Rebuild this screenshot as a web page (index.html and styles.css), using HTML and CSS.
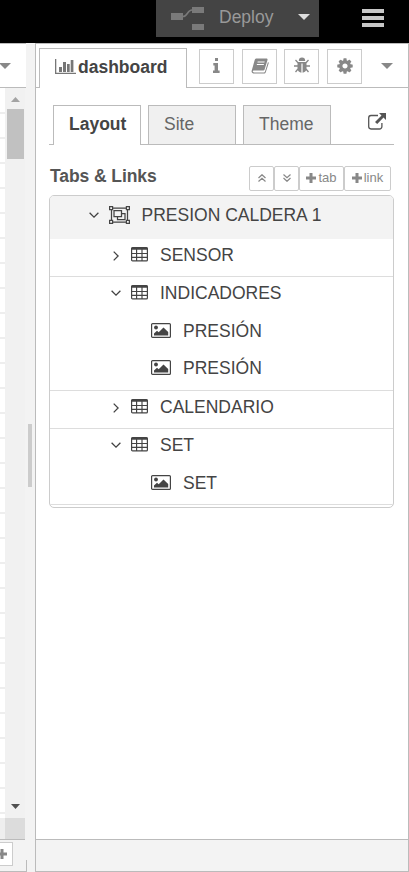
FILE: index.html
```
<!DOCTYPE html>
<html lang="es">
<head>
<meta charset="utf-8">
<title>Dashboard</title>
<link rel="stylesheet" href="styles.css">
</head>
<body>
<svg class="defs" width="0" height="0">
  <symbol id="table" viewBox="0 0 17 15"><rect x=".6" y=".6" width="15.800" height="13.300" rx="1" fill="none" stroke="currentColor" stroke-width="1.200"/><path d="M.6.500h15.800v2.200H.6z"/><path d="M1 6.500h15M1 10.300h15M5.600 2v12M11 2v12" fill="none" stroke="currentColor" stroke-width="1.150"/></symbol>
  <symbol id="image" viewBox="0 0 20 15"><rect x=".6" y=".6" width="18.800" height="13.800" rx="1" fill="none" stroke="currentColor" stroke-width="1.200"/><circle cx="5" cy="4.500" r="1.900"/><path d="M3 12.500v-2l3-2.700 1.700 1.500L12.500 4.500l4.700 4.600v3.400z"/></symbol>
  <symbol id="down" viewBox="0 0 10 6"><path d="M.6.7 5 5.100 9.400.7" fill="none" stroke="currentColor" stroke-width="1.300"/></symbol>
  <symbol id="right" viewBox="0 0 6 10"><path d="M.7.6 5.100 5 .7 9.400" fill="none" stroke="currentColor" stroke-width="1.300"/></symbol>
  <symbol id="plus" viewBox="0 0 10 10"><path d="M3.500 0h3v3.500H10v3H6.500V10h-3V6.500H0v-3h3.500z"/></symbol>
</svg>
<header class="topbar">
  <div class="deploy">
    <svg class="deploy-icon" width="33" height="24" viewBox="0 0 33 24"><path d="M0 6h12v7H0zM21 0h12v6H21zM21 17h12v6H21z"/><path d="M12 9.500c5 0 4-6.500 9-6.500" fill="none" stroke="currentColor" stroke-width="1.500"/></svg>
    <span>Deploy</span>
    <i class="caret light"></i>
  </div>
  <div class="burger"><i></i><i></i><i></i></div>
</header>
<div class="main">
  <section class="workspace">
    <div class="ws-tabs"><i class="caret"></i></div>
    <div class="ws-body">
      <div class="canvas"></div>
      <div class="scroll"><i class="arrow-up"></i><i class="thumb"></i><i class="arrow-down"></i></div>
    </div>
    <div class="ws-corner"><i></i><b></b></div>
    <div class="ws-footer"><div class="add"><svg width="10" height="10"><use href="#plus"/></svg></div><i class="edge"></i></div>
  </section>
  <div class="splitter"><i></i></div>
  <aside class="sidebar">
    <div class="tabs">
      <div class="tab-active">
        <svg width="21" height="15" viewBox="0 0 21 15"><path d="M0 0h1.300v13.700H21V15H0zM4 8h3v5H4zM8 3h3v10H8zM12 5h2.700v8H12zM15.700 1h2.700v12h-2.700z"/></svg>
        <span>dashboard</span>
      </div>
      <div class="tab-icons">
        <div class="ib"><svg width="7" height="15" viewBox="0 0 7 15"><path d="M2 0h3v3H2zM.3 5H5v7.500h1.600V15H0v-2.500h1.600v-5H.3z"/></svg></div>
        <div class="ib"><svg width="18" height="16" viewBox="0 0 18 16"><path fill-rule="evenodd" d="M5.500.5h9.800c1 0 1.500.7 1.200 1.600l-2.900 9.400c-.3.800-.8 1.100-1.500 1.100H3c-.8 0-1.400.3-1.200 1 .2.600.8.900 1.500.9h9.600c.6 0 .9-.3 1.100-.9L17 4c.9.400.8 1 .6 1.600l-2.800 8.700c-.3.800-.9 1.300-1.700 1.300H3.200c-1.500 0-2.900-1.200-2.600-2.600L3.700 2C4 1 4.600.5 5.500.5zM6.700 3.500l-.3 1h7l.3-1zM6 6l-.3 1h7L13 6z"/></svg></div>
        <div class="ib"><svg width="16" height="17" viewBox="0 0 16 17"><path d="M4.800 4a3.200 3.400 0 0 1 6.400 0zM3.500 5h9v6.500c0 2.500-2 4-3.900 4.200V6.500H7.400v9.200c-1.900-.2-3.900-1.700-3.900-4.200z"/><path d="M1.500 3 4 5.700M14.500 3 12 5.700M0 9h4m8 0h4M4 12l-2.500 3M12 12l2.500 3" fill="none" stroke="currentColor" stroke-width="1.300"/></svg></div>
        <div class="ib"><svg width="18" height="18" viewBox="0 0 1792 1792"><path d="M1152 896q0-106-75-181t-181-75-181 75-75 181 75 181 181 75 181-75 75-181zm512-109v222q0 12-8 23t-20 13l-185 28q-19 54-39 91 35 50 107 138 10 12 10 25t-9 23q-27 37-99 108t-94 71q-12 0-26-9l-138-108q-44 23-91 38-16 136-29 186-7 28-36 28h-222q-14 0-24.500-8.500t-11.500-21.500l-28-184q-49-16-90-37l-141 107q-10 9-25 9-14 0-25-11-126-114-165-168-7-10-7-23 0-12 8-23 15-21 51-66.500t54-70.500q-27-50-41-99l-183-27q-13-2-21-12.500t-8-23.500v-222q0-12 8-23t19-13l186-28q14-46 39-92-40-57-107-138-10-12-10-24 0-10 9-23 26-36 98.500-107.500t94.500-71.500q13 0 26 10l138 107q44-23 91-38 16-136 29-186 7-28 36-28h222q14 0 24.500 8.500t11.500 21.500l28 184q49 16 90 37l142-107q9-9 24-9 13 0 25 10 129 119 165 170 7 8 7 22 0 12-8 23-15 21-51 66.500t-54 70.500q26 50 41 98l183 28q13 2 21 12.500t8 23.500z"/></svg></div>
        <i class="caret"></i>
      </div>
    </div>
    <div class="content">
      <nav class="subtabs">
        <div class="subtab on">Layout</div>
        <div class="subtab">Site</div>
        <div class="subtab">Theme</div>
        <svg class="ext" width="18" height="17" viewBox="0 0 18 17"><path d="M10 2.500H3A2.400 2.400 0 0 0 .7 4.900v8.700A2.400 2.400 0 0 0 3 16h8.500a2.400 2.400 0 0 0 2.400-2.400V10" fill="none" stroke="currentColor" stroke-width="1.300"/><path d="M11 0H18v7l-2.500-2.400-6.300 6.500-2.200-2.200 6.500-6.400z"/></svg>
      </nav>
      <div class="heading">
        <h1>Tabs &amp; Links</h1>
        <div class="buttons">
          <div class="btn sq"><svg width="8" height="8" viewBox="0 0 8 8"><path d="M.5 4 4 .7 7.500 4M.5 7.500 4 4.200l3.500 3.300" fill="none" stroke="currentColor" stroke-width="1.200"/></svg></div>
          <div class="btn sq"><svg width="8" height="8" viewBox="0 0 8 8"><path d="M.5.5 4 3.800 7.500.5M.5 4 4 7.300 7.500 4" fill="none" stroke="currentColor" stroke-width="1.200"/></svg></div>
          <div class="btn tab"><svg width="10" height="10"><use href="#plus"/></svg>tab</div>
          <div class="btn link"><svg width="10" height="10"><use href="#plus"/></svg>link</div>
        </div>
      </div>
      <div class="tree">
        <div class="row head"><svg class="chev" width="10" height="6"><use href="#down"/></svg><svg class="group" width="21" height="18" viewBox="0 0 21 18"><path d="M2.500 2h16v14h-16zM5 4.500h7.500v6H5zM12.500 7.500H16v6H8.500v-3" fill="none" stroke="currentColor" stroke-width="1.250"/><path d="M.6.600h3v3h-3zM17.400.600h3v3h-3zM.6 14.400h3v3h-3zM17.400 14.400h3v3h-3z" fill="#f3f3f3" stroke="currentColor" stroke-width="1.200"/></svg><span>PRESION CALDERA 1</span></div>
        <div class="row g line"><svg class="chev" width="6" height="10"><use href="#right"/></svg><svg class="tb" width="17" height="15"><use href="#table"/></svg><span>SENSOR</span></div>
        <div class="row g"><svg class="chev" width="10" height="6"><use href="#down"/></svg><svg class="tb" width="17" height="15"><use href="#table"/></svg><span>INDICADORES</span></div>
        <div class="row w first"><svg class="im" width="20" height="15"><use href="#image"/></svg><span>PRESIÓN</span></div>
        <div class="row w second line"><svg class="im" width="20" height="15"><use href="#image"/></svg><span>PRESIÓN</span></div>
        <div class="row g line"><svg class="chev" width="6" height="10"><use href="#right"/></svg><svg class="tb" width="17" height="15"><use href="#table"/></svg><span>CALENDARIO</span></div>
        <div class="row g"><svg class="chev" width="10" height="6"><use href="#down"/></svg><svg class="tb" width="17" height="15"><use href="#table"/></svg><span>SET</span></div>
        <div class="row w line"><svg class="im" width="20" height="15"><use href="#image"/></svg><span>SET</span></div>
      </div>
    </div>
    <div class="side-footer"></div>
  </aside>
</div>
</body>
</html>
```
FILE: styles.css
```
* { box-sizing: border-box; }
body {
  margin: 0;
  width: 409px;
  height: 872px;
  overflow: hidden;
  display: flex;
  flex-direction: column;
  background: #f3f3f3;
  color: #444;
  font: 17.5px/20px "Liberation Sans", Arial, sans-serif;
}
.defs { position: absolute; }
svg { display: block; flex: none; fill: currentColor; }
i, b { display: block; flex: none; }
.caret { width: 12px; height: 6px; background: #888; clip-path: polygon(0 0, 100% 0, 50% 100%); }
.light { background: #ddd; }

.topbar { height: 43px; flex: none; background: #000; display: flex; align-items: flex-start; padding-left: 156px; }
.deploy { width: 163px; height: 37px; background: #444; color: #999; display: flex; align-items: flex-start; padding-left: 15px; }
.deploy-icon { margin-top: 7px; color: #7a7a7a; }
.deploy span { margin: 7px 0 0 15px; width: 79px; }
.deploy .caret { margin-top: 14px; }
.burger { margin: 9px 0 0 43px; width: 22px; display: grid; gap: 3px; }
.burger i { height: 4px; background: #c7c7c7; }

.main { flex: 1; display: flex; }
.workspace { width: 27px; display: flex; flex-direction: column; }
.ws-tabs { width: 26px; height: 45px; background: #fff; border-top: 1px solid #bbb; border-bottom: 1px solid #bbb; padding-top: 19px; }
.ws-tabs .caret { margin-left: -1px; }
.ws-body { height: 730px; display: flex; }
.canvas { width: 5px; background: repeating-linear-gradient(#fff 0 23px, #eee 23px 25px) 0 1px; }
.scroll { width: 20px; background: #f1f1f1; display: flex; flex-direction: column; align-items: center; }
.arrow-up { width: 9px; height: 5px; margin: 9px 0 0 1px; background: #a3a3a3; clip-path: polygon(50% 0, 100% 100%, 0 100%); }
.thumb { width: 17px; height: 50px; margin: 7px 0 0 1px; background: #c1c1c1; }
.arrow-down { width: 9px; height: 5px; margin: auto 0 9px 1px; background: #505050; clip-path: polygon(0 0, 100% 0, 50% 100%); }
.ws-corner { width: 25px; height: 22px; display: flex; border-bottom: 1px solid #bbb; }
.ws-corner i { width: 5px; background: #eee; }
.ws-corner b { width: 20px; background: #dcdcdc; }
.ws-footer { height: 32px; display: flex; justify-content: space-between; border-bottom: 1px solid #bbb; }
.add { width: 13px; height: 24px; margin-top: 2px; padding: 6px 0 0; background: #fff; border: 1px solid #ccc; border-left: 0; color: #888; overflow: hidden; }
.add svg { margin-left: -3px; }
.edge { width: 1px; height: 12px; margin-top: 20px; background: #bbb; }

.splitter { width: 8px; padding: 381px 0 0 1px; }
.splitter i { width: 4px; height: 63px; background: #ccc; }

.sidebar { width: 374px; border: 1px solid #bbb; background: #fff; display: flex; flex-direction: column; }
.tabs { height: 44px; display: flex; align-items: flex-end; background: linear-gradient(#bbb, #bbb) bottom / 100% 1px no-repeat; padding-left: 3px; }
.tab-active { width: 148px; height: 40px; border: 1px solid #bbb; border-bottom: 0; background: #fff; font-weight: bold; display: flex; padding: 10px 0 0 15px; }
.tab-active svg { color: #777; }
.tab-active span { margin: -2px 0 0 2px; }
.tab-icons { height: 44px; display: flex; padding: 5px 0 0 12px; color: #888; }
.ib { width: 35px; height: 35px; border: 1px solid #ccc; margin-right: 8px; display: flex; align-items: center; justify-content: center; padding-bottom: 2px; }
.ib:nth-child(2) { margin-right: 7px; }
.tab-icons .caret { margin: 14px 0 0 11px; }

.content { flex: 1; padding: 17px 14px 0 13px; }
.subtabs { height: 40px; display: flex; gap: 7px; padding-left: 4px; background: linear-gradient(#bbb, #bbb) bottom / 100% 1px no-repeat; }
.subtab { width: 88px; height: 40px; padding: 8px 0 0 15px; border: 1px solid #bbb; background: #f0f0f0; color: #666; }
.subtab.on { background: #fff; border-bottom: 0; font-weight: bold; color: #444; }
.ext { margin: 8px 0 0 30px; color: #555; }
.heading { height: 50px; display: flex; justify-content: space-between; padding: 21px 3px 0 1px; }
h1 { margin: 0; font-size: 17.5px; line-height: 20px; color: #555; letter-spacing: -.08px; }
.buttons { display: flex; height: 25px; color: #888; font-size: 13px; }
.btn { height: 25px; border: 1px solid #ccc; border-radius: 2px; display: flex; align-items: center; justify-content: center; gap: 2px; padding-bottom: 2px; }
.sq { width: 25px; }
.tab { width: 45px; }
.link { width: 47px; }

.tree { height: 313px; border: 1px solid #ccc; border-radius: 5px; overflow: hidden; }
.row { height: 38px; display: flex; align-items: flex-start; }
.line { border-bottom: 1px solid #ddd; }
.head { height: 43px; background: #f3f3f3; padding-left: 39px; }
.head .chev { margin-top: 16px; }
.group { margin: 10px 0 0 10px; }
.head span { margin: 9px 0 0 11.5px; }
.g { padding-left: 61px; }
.g .chev { margin: 13px 10px 0 0; }
.g .chev[width="6"] { margin: 12px 12px 0 2px; }
.tb { margin: 8px 12px 0 0; }
.g span { margin-top: 6px; }
.w { padding-left: 101px; }
.im { margin: 8px 12px 0 0; }
.w span { margin-top: 6px; }
.first { height: 37px; }
.second { height: 39px; }
.side-footer { height: 32px; background: #f3f3f3; border-top: 1px solid #bbb; }
```
